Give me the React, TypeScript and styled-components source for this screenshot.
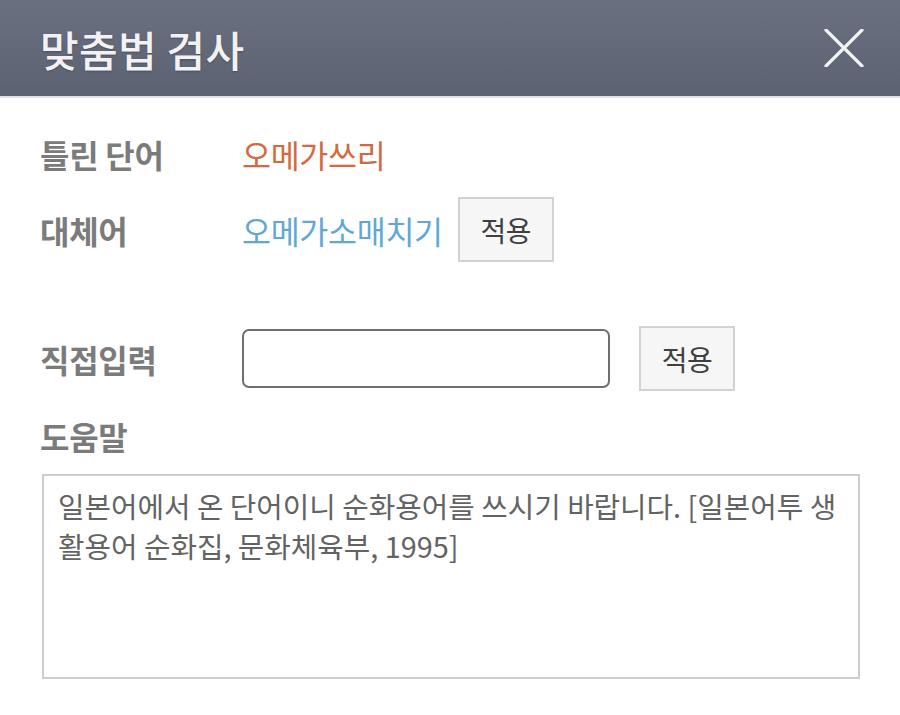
import styled, { createGlobalStyle } from 'styled-components'

const GlobalStyle = createGlobalStyle`
  html, body { margin: 0; padding: 0; background: #fff; }
  body { font-family: "Noto Sans CJK KR", "Noto Sans", sans-serif; }
  * { box-sizing: border-box; }
`

const Dialog = styled.div`
  width: 900px; height: 715px; background: #fff; overflow: hidden;
`
const Header = styled.header`
  height: 98px; display: flex; align-items: center; justify-content: space-between;
  padding: 0 34px 0 40px;
  background: linear-gradient(to bottom, #6b7080 0%, #5d6272 100%);
  border-bottom: 2px solid #dfe2e8;
`
const Title = styled.h1`
  margin: 0; font-size: 42px; font-weight: 500; color: #f2f2f4;
  letter-spacing: 0.3px; text-shadow: 0 1px 2px rgba(0,0,0,0.25);
`
const CloseButton = styled.button`
  width: 44px; height: 44px; padding: 0; border: none; background: none;
  display: flex; align-items: center; justify-content: center; cursor: pointer;
`
const Body = styled.div`
  padding: 31px 40px 0 40px; display: flex; flex-direction: column;
`
const Row = styled.div<{ $top?: number; $height: number }>`
  display: flex; align-items: center;
  margin-top: ${({ $top }) => $top ?? 0}px;
  height: ${({ $height }) => $height}px;
`
const Label = styled.span`
  width: 202px; flex: none; font-size: 32px; font-weight: 700;
  color: #7b7b7b; letter-spacing: -0.3px;
`
const Word = styled.span<{ $tone: 'wrong' | 'fix' }>`
  font-size: 31.5px; letter-spacing: -0.3px;
  color: ${({ $tone }) => ($tone === 'wrong' ? '#d3693f' : '#5fa8d5')};
`
const ApplyButton = styled.button<{ $left: number }>`
  margin-left: ${({ $left }) => $left}px;
  width: 96px; height: 65px; flex: none;
  background: #f6f6f6; border: 2px solid #d2d2d2; border-radius: 0;
  font-family: inherit; font-size: 28px; color: #3f3f3f; letter-spacing: -0.5px;
  cursor: pointer;
`
const TextInput = styled.input`
  width: 368px; height: 59px; flex: none;
  border: 2px solid #6f6f6f; border-radius: 7px; background: #fff;
  font-family: inherit; font-size: 26px; padding: 0 12px;
`
const HelpBox = styled.div`
  margin-top: 18px; margin-left: 2px; width: 818px; height: 205px;
  border: 2px solid #cdcdcd; padding: 10px 10px 0 14px;
  font-size: 28.8px; line-height: 40px; color: #636363; letter-spacing: 0;
  white-space: nowrap;
`

function CloseIcon() {
  return (
    <svg width="40" height="38" viewBox="0 0 40 38" fill="none">
      <path d="M2 1 L38 37 M38 1 L2 37" stroke="#f4f4f6" strokeWidth="3.2" strokeLinecap="round" />
    </svg>
  )
}

export default function App() {
  return (
    <Dialog>
      <GlobalStyle />
      <Header>
        <Title>맞춤법 검사</Title>
        <CloseButton aria-label="닫기"><CloseIcon /></CloseButton>
      </Header>
      <Body>
        <Row $height={50}>
          <Label>틀린 단어</Label>
          <Word $tone="wrong">오메가쓰리</Word>
        </Row>
        <Row $top={18} $height={65}>
          <Label>대체어</Label>
          <Word $tone="fix">오메가소매치기</Word>
          <ApplyButton $left={15}>적용</ApplyButton>
        </Row>
        <Row $top={64} $height={65}>
          <Label>직접입력</Label>
          <TextInput />
          <ApplyButton $left={29}>적용</ApplyButton>
        </Row>
        <Row $top={25} $height={40}>
          <Label>도움말</Label>
        </Row>
        <HelpBox>
          일본어에서 온 단어이니 순화용어를 쓰시기 바랍니다. [일본어투 생<br />
          활용어 순화집, 문화체육부, 1995]
        </HelpBox>
      </Body>
    </Dialog>
  )
}
